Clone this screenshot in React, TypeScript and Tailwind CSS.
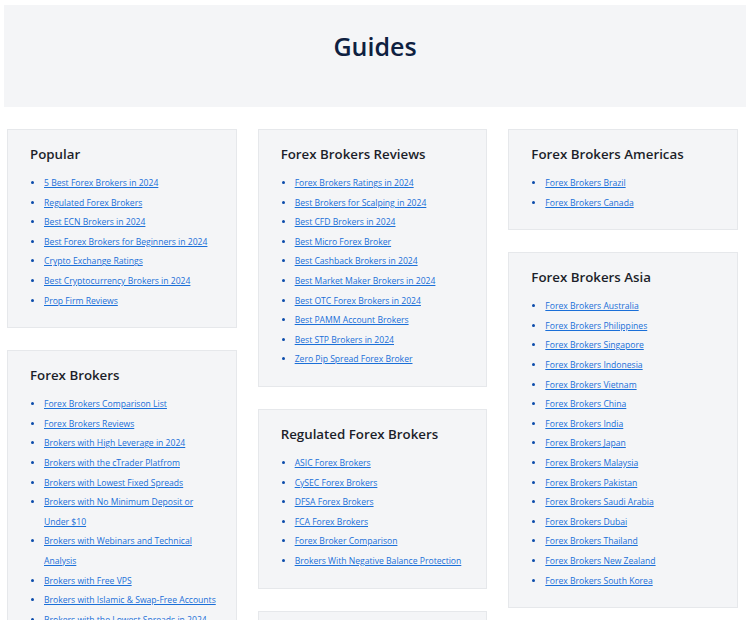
import React from "react";

type Guide = { title: string; links: string[] };

const columns: Guide[][] = [
  [
    {
      title: "Popular",
      links: [
        "5 Best Forex Brokers in 2024",
        "Regulated Forex Brokers",
        "Best ECN Brokers in 2024",
        "Best Forex Brokers for Beginners in 2024",
        "Crypto Exchange Ratings",
        "Best Cryptocurrency Brokers in 2024",
        "Prop Firm Reviews",
      ],
    },
    {
      title: "Forex Brokers",
      links: [
        "Forex Brokers Comparison List",
        "Forex Brokers Reviews",
        "Brokers with High Leverage in 2024",
        "Brokers with the cTrader Platfrom",
        "Brokers with Lowest Fixed Spreads",
        "Brokers with No Minimum Deposit or Under $10",
        "Brokers with Webinars and Technical Analysis",
        "Brokers with Free VPS",
        "Brokers with Islamic & Swap-Free Accounts",
        "Brokers with the Lowest Spreads in 2024",
        "Brokers with MetaTrader 4",
        "Brokers with MetaTrader 5",
      ],
    },
  ],
  [
    {
      title: "Forex Brokers Reviews",
      links: [
        "Forex Brokers Ratings in 2024",
        "Best Brokers for Scalping in 2024",
        "Best CFD Brokers in 2024",
        "Best Micro Forex Broker",
        "Best Cashback Brokers in 2024",
        "Best Market Maker Brokers in 2024",
        "Best OTC Forex Brokers in 2024",
        "Best PAMM Account Brokers",
        "Best STP Brokers in 2024",
        "Zero Pip Spread Forex Broker",
      ],
    },
    {
      title: "Regulated Forex Brokers",
      links: [
        "ASIC Forex Brokers",
        "CySEC Forex Brokers",
        "DFSA Forex Brokers",
        "FCA Forex Brokers",
        "Forex Broker Comparison",
        "Brokers With Negative Balance Protection",
      ],
    },
    {
      title: "Forex Brokers Europe",
      links: ["Forex Brokers UK", "Forex Brokers Germany", "Forex Brokers France"],
    },
  ],
  [
    {
      title: "Forex Brokers Americas",
      links: ["Forex Brokers Brazil", "Forex Brokers Canada"],
    },
    {
      title: "Forex Brokers Asia",
      links: [
        "Forex Brokers Australia",
        "Forex Brokers Philippines",
        "Forex Brokers Singapore",
        "Forex Brokers Indonesia",
        "Forex Brokers Vietnam",
        "Forex Brokers China",
        "Forex Brokers India",
        "Forex Brokers Japan",
        "Forex Brokers Malaysia",
        "Forex Brokers Pakistan",
        "Forex Brokers Saudi Arabia",
        "Forex Brokers Dubai",
        "Forex Brokers Thailand",
        "Forex Brokers New Zealand",
        "Forex Brokers South Korea",
      ],
    },
    {
      title: "Forex Brokers Africa",
      links: ["Forex Brokers South Africa", "Forex Brokers Nigeria"],
    },
  ],
];

function GuideCard({ guide }: { guide: Guide }) {
  return (
    <div className="border border-[#e6e8eb] bg-[#f4f5f7] pl-[22px] pr-[17px] pt-[14px] pb-[16px]">
      <h2 className="text-[13.3px] leading-[20px] font-semibold text-[#1c1f2a]">{guide.title}</h2>
      <ul className="mt-[10px] list-disc pl-[14px] marker:text-[#0b4cab]">
        {guide.links.map((link) => (
          <li key={link} className="text-[8.6px] leading-[19.6px]">
            <a href="#" className="text-[#1a6fd8] underline underline-offset-[1px]">
              {link}
            </a>
          </li>
        ))}
      </ul>
    </div>
  );
}

export default function App() {
  return (
    <div className="px-[4px] pt-[5px] font-['Open_Sans','Noto_Sans',sans-serif] bg-white">
      <header className="bg-[#f4f5f7] pt-[25px] pb-[45px] text-center">
        <h1 className="text-[25px] leading-[32px] font-semibold text-[#0e2040]">Guides</h1>
      </header>

      <div className="mt-[22px] ml-[3px] mr-[8px] grid grid-cols-3 gap-x-[21px] items-start">
        {columns.map((col, i) => (
          <div key={i} className="flex flex-col gap-[22px]">
            {col.map((guide) => (
              <GuideCard key={guide.title} guide={guide} />
            ))}
          </div>
        ))}
      </div>
    </div>
  );
}
